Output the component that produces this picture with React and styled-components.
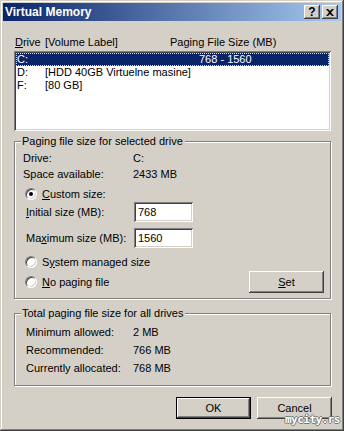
import React from "react";
import styled, { createGlobalStyle } from "styled-components";

const GlobalStyle = createGlobalStyle`
  html, body {
    margin: 0;
    padding: 0;
    background: #d4d0c8;
  }
  body {
    font-family: "Liberation Sans", Arial, sans-serif;
    font-size: 11px;
    color: #000;
  }
  * {
    box-sizing: border-box;
  }
`;

const raised = `
  box-shadow: inset -1px -1px #404040, inset 1px 1px #fff,
    inset -2px -2px #808080, inset 2px 2px #d4d0c8;
`;

const sunken = `
  box-shadow: inset 1px 1px #808080, inset -1px -1px #fff,
    inset 2px 2px #404040, inset -2px -2px #d4d0c8;
`;

const Window = styled.div`
  position: relative;
  width: 344px;
  height: 431px;
  padding: 3px;
  background: #d4d0c8;
  box-shadow: inset -1px -1px #404040, inset 1px 1px #d4d0c8,
    inset -2px -2px #808080, inset 2px 2px #fff;
  display: flex;
  flex-direction: column;
`;

const TitleBar = styled.div`
  height: 18px;
  display: flex;
  align-items: center;
  padding: 0 3px 0 2px;
  background: linear-gradient(to right, #0a246a, #a6caf0);
  color: #fff;
`;

const Title = styled.span`
  flex: 1;
  font-weight: bold;
  font-size: 12px;
  line-height: 18px;
`;

const CaptionButton = styled.div`
  width: 16px;
  height: 14px;
  margin-left: 2px;
  background: #d4d0c8;
  ${raised}
  display: flex;
  align-items: center;
  justify-content: center;
  color: #000;
  font-weight: bold;
  font-size: 12px;
  line-height: 14px;
`;

const Body = styled.div`
  flex: 1;
  display: flex;
  flex-direction: column;
  padding: 15px 10px 0 11px;
`;

const HeaderRow = styled.div`
  display: grid;
  grid-template-columns: 30px 125px 1fr;
  height: 13px;
  line-height: 13px;
  padding-left: 1px;
`;

const ListBox = styled.div`
  margin-top: 2px;
  height: 80px;
  padding: 2px;
  background: #fff;
  ${sunken}
`;

const ListRow = styled.div`
  display: grid;
  grid-template-columns: 28px 154px 1fr;
  height: 13px;
  line-height: 13px;
  padding-left: 1px;
  white-space: nowrap;
  background: ${(p) => (p.$selected ? "#0a246a" : "transparent")};
  color: ${(p) => (p.$selected ? "#fff" : "#000")};
  outline: ${(p) => (p.$selected ? "1px dotted #f3dc9a" : "none")};
  outline-offset: -1px;
`;

const Group = styled.fieldset`
  margin: ${(p) => p.$top}px 0 0;
  padding: ${(p) => p.$pad};
  min-width: 0;
  border: 1px solid #808080;
  box-shadow: inset 1px 1px #fff, 1px 1px #fff;
`;

const Legend = styled.legend`
  margin-left: 6px;
  padding: 0 2px 0 1px;
  line-height: 13px;
  background: #d4d0c8;
`;

const InfoRow = styled.div`
  display: grid;
  grid-template-columns: ${(p) => p.$labelWidth}px 1fr;
  height: ${(p) => p.$h}px;
  line-height: ${(p) => p.$h}px;
  padding-left: ${(p) => p.$indent}px;
`;

const RadioRow = styled.div`
  display: flex;
  align-items: center;
  gap: 5px;
  height: 16px;
  margin-top: ${(p) => p.$top || 0}px;
  padding-left: 10px;
`;

const Radio = styled.span`
  position: relative;
  width: 12px;
  height: 12px;
  border-radius: 50%;
  background: #fff;
  border: 1px solid;
  border-color: #808080 #fff #fff #808080;
  box-shadow: inset 1px 1px #404040, inset -1px -1px #d4d0c8;

  &::after {
    content: "";
    display: ${(p) => (p.$checked ? "block" : "none")};
    position: absolute;
    left: 3px;
    top: 3px;
    width: 4px;
    height: 4px;
    border-radius: 50%;
    background: #000;
  }
`;

const FieldRow = styled.div`
  display: flex;
  align-items: center;
  height: 20px;
  margin-top: ${(p) => p.$top || 0}px;
  padding-left: 11px;
`;

const FieldLabel = styled.span`
  width: 108px;
`;

const Input = styled.div`
  width: 59px;
  height: 20px;
  padding: 0 4px;
  line-height: 20px;
  background: #fff;
  ${sunken}
`;

const SetRow = styled.div`
  display: flex;
  align-items: center;
  justify-content: space-between;
  height: 22px;
  margin-top: 1px;
`;

const Button = styled.div`
  width: 75px;
  height: 22px;
  display: flex;
  align-items: center;
  justify-content: center;
  background: #d4d0c8;
  ${(p) =>
    p.$default
      ? `border: 1px solid #000;
         box-shadow: inset -1px -1px #404040, inset 1px 1px #fff,
           inset -2px -2px #808080;`
      : raised}
`;

const ButtonRow = styled.div`
  display: flex;
  justify-content: flex-end;
  gap: 6px;
  margin-top: 11px;
  margin-right: -1px;
`;

const Watermark = styled.span`
  position: absolute;
  right: 4px;
  bottom: 5px;
  font-family: "DejaVu Sans Mono", monospace;
  font-weight: bold;
  font-size: 11px;
  letter-spacing: -0.5px;
  color: #fff;
  text-shadow: 1px 0 #777, -1px 0 #777, 0 1px #777, 0 -1px #777;
`;

const U = styled.u`
  text-decoration: underline;
  text-underline-offset: 1px;
`;

const CloseIcon = () => (
  <svg width="8" height="7" viewBox="0 0 8 7">
    <path d="M0 0h2l2 2 2-2h2L5 3.5 8 7H6L4 5 2 7H0l3-3.5z" fill="#000" />
  </svg>
);

export default function App() {
  return (
    <>
      <GlobalStyle />
      <Window>
        <TitleBar>
          <Title>Virtual Memory</Title>
          <CaptionButton>?</CaptionButton>
          <CaptionButton>
            <CloseIcon />
          </CaptionButton>
        </TitleBar>
        <Body>
          <HeaderRow>
            <span>
              <U>D</U>rive
            </span>
            <span>[Volume Label]</span>
            <span>Paging File Size (MB)</span>
          </HeaderRow>
          <ListBox>
            <ListRow $selected>
              <span>C:</span>
              <span></span>
              <span>768 - 1560</span>
            </ListRow>
            <ListRow>
              <span>D:</span>
              <span>[HDD 40GB Virtuelne masine]</span>
              <span></span>
            </ListRow>
            <ListRow>
              <span>F:</span>
              <span>[80 GB]</span>
              <span></span>
            </ListRow>
          </ListBox>

          <Group $top={4} $pad="2px 6px 5px 0">
            <Legend>Paging file size for selected drive</Legend>
            <InfoRow $h={16} $labelWidth={110} $indent={8}>
              <span>Drive:</span>
              <span>C:</span>
            </InfoRow>
            <InfoRow $h={16} $labelWidth={110} $indent={8}>
              <span>Space available:</span>
              <span>2433 MB</span>
            </InfoRow>
            <RadioRow $top={4}>
              <Radio $checked />
              <span>
                <U>C</U>ustom size:
              </span>
            </RadioRow>
            <FieldRow>
              <FieldLabel>
                <U>I</U>nitial size (MB):
              </FieldLabel>
              <Input>768</Input>
            </FieldRow>
            <FieldRow $top={6}>
              <FieldLabel>
                Ma<U>x</U>imum size (MB):
              </FieldLabel>
              <Input>1560</Input>
            </FieldRow>
            <RadioRow $top={6}>
              <Radio />
              <span>
                S<U>y</U>stem managed size
              </span>
            </RadioRow>
            <SetRow>
              <RadioRow>
                <Radio />
                <span>
                  <U>N</U>o paging file
                </span>
              </RadioRow>
              <Button>
                <span>
                  <U>S</U>et
                </span>
              </Button>
            </SetRow>
          </Group>

          <Group $top={8} $pad="3px 0 8px 0">
            <Legend>Total paging file size for all drives</Legend>
            <InfoRow $h={18} $labelWidth={107} $indent={11}>
              <span>Minimum allowed:</span>
              <span>2 MB</span>
            </InfoRow>
            <InfoRow $h={18} $labelWidth={107} $indent={11}>
              <span>Recommended:</span>
              <span>766 MB</span>
            </InfoRow>
            <InfoRow $h={18} $labelWidth={107} $indent={11}>
              <span>Currently allocated:</span>
              <span>768 MB</span>
            </InfoRow>
          </Group>

          <ButtonRow>
            <Button $default>OK</Button>
            <Button>Cancel</Button>
          </ButtonRow>
        </Body>
        <Watermark>mycity.rs</Watermark>
      </Window>
    </>
  );
}
